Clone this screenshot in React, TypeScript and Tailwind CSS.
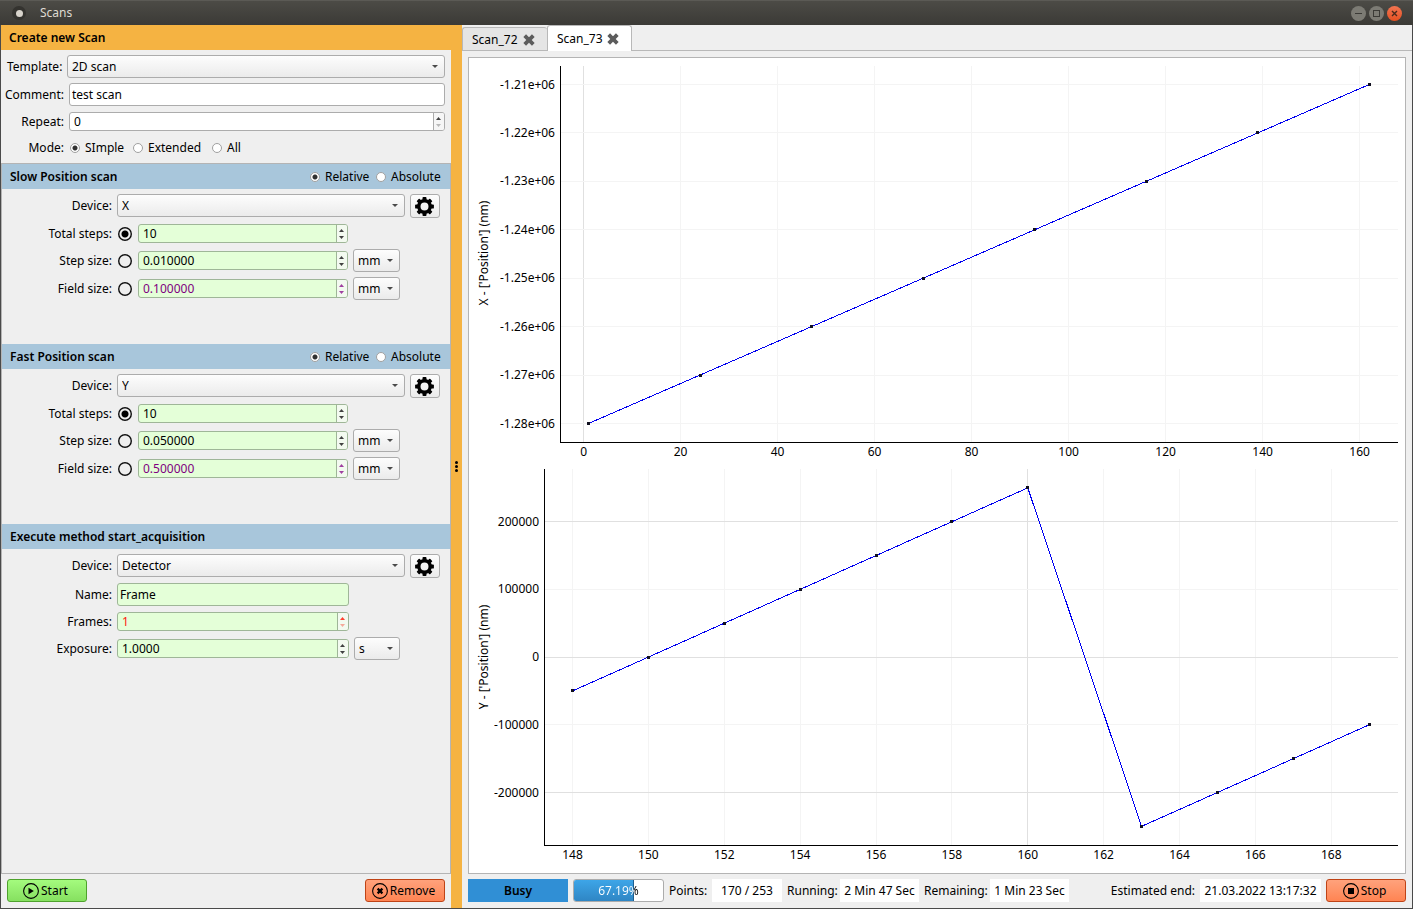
import { useState, type ReactNode } from 'react';

const SELECT_BG = 'bg-linear-to-b from-[#fdfdfd] to-[#ebebeb]';

interface SelectProps {
  label: string;
  value: string;
  options: string[];
  className: string;
}

function Select({ label, value, options, className }: SelectProps) {
  return (
    <span className={`relative block h-[23px] ${className}`}>
      <select
        aria-label={label}
        defaultValue={value}
        className={`block h-full w-full appearance-none rounded-[3px] border border-[#acacac] pl-1 pr-3 ${SELECT_BG}`}
      >
        {options.map((o) => (
          <option key={o}>{o}</option>
        ))}
      </select>
      <svg viewBox="0 0 6 3" className="pointer-events-none absolute right-[7px] top-[10px] h-[3px] w-[6px]">
        <path d="M0 0h6L3 3z" fill="#4a4a4a" />
      </svg>
    </span>
  );
}

interface SpinBoxProps {
  id: string;
  value: string;
  className?: string;
  green?: boolean;
  tone?: 'normal' | 'purple' | 'red';
  atMin?: boolean;
}

const TONES = {
  normal: { text: 'text-black', arrow: '#404040', dim: '#b9b9b9' },
  purple: { text: 'text-[#800080]', arrow: '#a040a0', dim: '#a040a0' },
  red: { text: 'text-[#ff2010]', arrow: '#ff4030', dim: '#f5a99b' },
};

function SpinBox({ id, value, className = '', green = true, tone = 'normal', atMin = false }: SpinBoxProps) {
  const t = TONES[tone];
  return (
    <span
      className={`flex h-[19px] overflow-hidden rounded-[3px] border ${
        green ? 'border-[#9fb698] bg-[#e4ffd8]' : 'border-[#acacac] bg-white'
      } ${className}`}
    >
      <input id={id} defaultValue={value} className={`min-w-0 flex-1 bg-transparent px-1 outline-none ${t.text}`} />
      <span
        className={`flex w-[11px] flex-col gap-[1px] border-l py-[2px] pr-px ${
          green ? 'border-[#9fb698] bg-[#f3faf0]' : 'border-[#acacac] bg-[#f6f6f6]'
        }`}
      >
        <button aria-label="Increase" className="flex flex-1 items-center justify-center">
          <svg viewBox="0 0 5 3" className="h-[3px] w-[5px]">
            <path d="M0 3h5L2.5 0z" fill={t.arrow} />
          </svg>
        </button>
        <button aria-label="Decrease" className="flex flex-1 items-center justify-center">
          <svg viewBox="0 0 5 3" className="h-[3px] w-[5px]">
            <path d="M0 0h5L2.5 3z" fill={atMin ? t.dim : t.arrow} />
          </svg>
        </button>
      </span>
    </span>
  );
}

interface RadioProps {
  name: string;
  label: string;
  checked?: boolean;
  className?: string;
}

function Radio({ name, label, checked, className = '' }: RadioProps) {
  return (
    <label className={`flex items-center gap-[5px] whitespace-nowrap ${className}`}>
      <input
        type="radio"
        name={name}
        defaultChecked={checked}
        className="size-[10px] shrink-0 appearance-none rounded-full border border-[#a0a0a0] bg-white checked:bg-[radial-gradient(circle,#303030_2px,#ffffff_3px)]"
      />
      {label}
    </label>
  );
}

function GearButton() {
  return (
    <button
      aria-label="Device settings"
      className={`flex h-6 w-[30px] items-center justify-center rounded-[3px] border border-[#acacac] pr-px ${SELECT_BG}`}
    >
      <svg viewBox="-10 -10 20 20" className="size-[19px]">
        <circle r="6" fill="none" stroke="#000" strokeWidth="3.6" />
        {[0, 45, 90, 135, 180, 225, 270, 315].map((a) => (
          <rect key={a} x="-2.1" y="-9.9" width="4.2" height="4" rx="0.9" transform={`rotate(${a})`} />
        ))}
      </svg>
    </button>
  );
}

function Section({ title, children, modes }: { title: string; children: ReactNode; modes?: boolean }) {
  return (
    <section className="h-[180px]">
      <header className="flex h-[25px] items-center justify-between bg-[#a8c6db] pl-2 pr-[10px]">
        <h2 className="font-semibold">{title}</h2>
        {modes && (
          <div className="flex">
            <Radio name={title} label="Relative" checked className="w-[66px]" />
            <Radio name={title} label="Absolute" className="w-16" />
          </div>
        )}
      </header>
      <div className="flex flex-col pt-[5px]">{children}</div>
    </section>
  );
}

function Row({ label, id, className, children }: { label: string; id?: string; className: string; children: ReactNode }) {
  return (
    <div className={`flex items-center gap-[5px] ${className}`}>
      <label htmlFor={id} className="w-[110px] shrink-0 text-right">
        {label}
      </label>
      {children}
    </div>
  );
}

function DeviceRow({ value }: { value: string }) {
  return (
    <Row label="Device:" className="h-6 pr-[10px]">
      <Select label="Device" value={value} options={['X', 'Y', 'Detector']} className="flex-1 self-start" />
      <GearButton />
    </Row>
  );
}

interface StepRowProps {
  group: string;
  label: string;
  value: string;
  checked?: boolean;
  unit?: boolean;
  tone?: 'normal' | 'purple';
  className: string;
}

function StepRow({ group, label, value, checked, unit, tone, className }: StepRowProps) {
  const id = `${group}-${label}`;
  return (
    <Row label={`${label}:`} id={id} className={className}>
      <span className="flex w-4 shrink-0 justify-center">
        <input
          type="radio"
          name={`${group}-source`}
          aria-label={`Set ${label}`}
          defaultChecked={checked}
          className="size-[14px] appearance-none rounded-full bg-[radial-gradient(circle,transparent_5px,#101010_6px)] checked:bg-[radial-gradient(circle,#000000_3px,transparent_4px,transparent_5px,#101010_6px)]"
        />
      </span>
      <SpinBox id={id} value={value} tone={tone} className="w-[210px]" />
      {unit && <Select label={`${label} unit`} value="mm" options={['nm', 'mm']} className="w-[47px]" />}
    </Row>
  );
}

function PositionScan({ title, device, step, field }: { title: string; device: string; step: string; field: string }) {
  return (
    <Section title={title} modes>
      <DeviceRow value={device} />
      <StepRow group={title} label="Total steps" value="10" checked className="mt-[6px] h-[19px]" />
      <StepRow group={title} label="Step size" value={step} unit className="mt-[6px] h-[23px]" />
      <StepRow group={title} label="Field size" value={field} unit tone="purple" className="mt-[5px] h-[23px]" />
    </Section>
  );
}

type IconKind = 'play' | 'cross' | 'stop';

function CircleIcon({ kind }: { kind: IconKind }) {
  return (
    <svg viewBox="0 0 16 16" className="size-4">
      <circle cx="8" cy="8" r="7.4" fill="none" stroke="#000" strokeWidth="1.1" />
      {kind === 'play' && <path d="M5.5 4.8L10.8 8l-5.3 3.2z" />}
      {kind === 'cross' && <path d="M5.6 5.6l4.8 4.8M10.4 5.6l-4.8 4.8" stroke="#000" strokeWidth="2.2" />}
      {kind === 'stop' && <rect x="5" y="5" width="6" height="6" />}
    </svg>
  );
}

function ActionButton({ kind, label }: { kind: IconKind; label: string }) {
  const colors =
    kind === 'play'
      ? 'border-[#4ea22c] from-[#a4fb7e] to-[#86e060]'
      : 'border-[#bf4316] from-[#ffa27c] to-[#ff8452]';
  return (
    <button
      className={`flex h-[23px] w-20 items-center justify-center gap-[2px] rounded-[3px] border bg-linear-to-b pr-[3px] ${colors}`}
    >
      <CircleIcon kind={kind} />
      {label}
    </button>
  );
}

interface ChartProps {
  title: string;
  height: number;
  left: number;
  top: number;
  bottom: number;
  titleY: number;
  xTicks: number[];
  yTicks: { value: number; label: string }[];
  points: [number, number][];
  toX: (v: number) => number;
  toY: (v: number) => number;
  strongX: number[];
  strongY: number[];
}

function Chart(props: ChartProps) {
  const { title, height, left, top, bottom, titleY, xTicks, yTicks, points, toX, toY, strongX, strongY } = props;
  const right = 929;
  return (
    <svg viewBox={`0 0 936 ${height}`} role="img" aria-label={title} className="block w-full" fontSize="12">
      <g shapeRendering="crispEdges">
        {xTicks.map((v) => (
          <path
            key={v}
            d={`M${Math.floor(toX(v)) + 0.5} ${top}V${bottom}`}
            stroke={strongX.includes(v) ? '#e0e0e0' : '#f4f4f4'}
          />
        ))}
        {yTicks.map(({ value }) => (
          <path
            key={value}
            d={`M${left} ${Math.floor(toY(value)) + 0.5}H${right}`}
            stroke={strongY.includes(value) ? '#e0e0e0' : '#f4f4f4'}
          />
        ))}
        <path d={`M${left + 0.5} ${top}V${bottom + 0.5}H${right}`} fill="none" stroke="#000" />
        <polyline points={points.map(([x, y]) => `${toX(x)},${toY(y)}`).join(' ')} fill="none" stroke="#0000f0" />
        {points.map(([x, y]) => (
          <rect key={x} x={Math.floor(toX(x)) - 1} y={Math.floor(toY(y)) - 1} width="3" height="3" fill="#101020" />
        ))}
      </g>
      {xTicks.map((v) => (
        <text key={v} x={toX(v)} y={bottom + 14} textAnchor="middle">
          {v}
        </text>
      ))}
      {yTicks.map(({ value, label }) => (
        <text key={value} x={left - 5} y={toY(value) + 4} textAnchor="end">
          {label}
        </text>
      ))}
      <text transform={`translate(19 ${titleY}) rotate(-90)`} textAnchor="middle">
        {title}
      </text>
    </svg>
  );
}

const X_POINTS: [number, number][] = [1, 24, 47, 70, 93, 116, 139, 162].map((x, i) => [x, -1.28 + i * 0.01]);

const Y_POINTS: [number, number][] = [
  [148, -50000],
  [150, 0],
  [152, 50000],
  [154, 100000],
  [156, 150000],
  [158, 200000],
  [160, 250000],
  [163, -250000],
  [165, -200000],
  [167, -150000],
  [169, -100000],
];

function Plots() {
  return (
    <div className="flex-1 border border-[#b4b4b4] bg-white">
      <Chart
        title="X - ['Position'] (nm)"
        height={404}
        left={91}
        top={8}
        bottom={384}
        titleY={195}
        xTicks={[0, 20, 40, 60, 80, 100, 120, 140, 160]}
        yTicks={[1.21, 1.22, 1.23, 1.24, 1.25, 1.26, 1.27, 1.28].map((v) => ({ value: -v, label: `-${v}e+06` }))}
        points={X_POINTS}
        toX={(v) => 114.6 + v * 4.85}
        toY={(v) => 26.5 + (-1.21 - v) * 4843}
        strongX={[0]}
        strongY={[]}
      />
      <Chart
        title="Y - ['Position'] (nm)"
        height={411}
        left={75}
        top={7}
        bottom={383}
        titleY={195}
        xTicks={[148, 150, 152, 154, 156, 158, 160, 162, 164, 166, 168]}
        yTicks={[200000, 100000, 0, -100000, -200000].map((v) => ({ value: v, label: String(v) }))}
        points={Y_POINTS}
        toX={(v) => 103.5 + (v - 148) * 37.94}
        toY={(v) => 195.1 - v * 0.000677}
        strongX={[160]}
        strongY={[200000, 0, -200000]}
      />
    </div>
  );
}

function CloseMark() {
  return (
    <svg viewBox="0 0 12 12" className="size-3">
      <path d="M1.7 1.7l8.6 8.6M10.3 1.7l-8.6 8.6" stroke="#5c5c5c" strokeWidth="3.8" />
    </svg>
  );
}

function Tab({ label, active, onSelect }: { label: string; active: boolean; onSelect: () => void }) {
  return (
    <div
      className={`flex w-[85px] items-center justify-between rounded-t-[3px] border border-b-0 border-[#b8b8b8] pl-[9px] pr-3 ${
        active ? 'h-[26px] bg-white' : 'mb-px h-[23px] border-r-0 bg-[#e5e5e5] pt-[2px]'
      }`}
    >
      <button role="tab" aria-selected={active} onClick={onSelect}>
        {label}
      </button>
      <button aria-label={`Close ${label}`}>
        <CloseMark />
      </button>
    </div>
  );
}

function StatusValue({ children, className }: { children: ReactNode; className: string }) {
  return (
    <output className={`flex h-[23px] items-center justify-center whitespace-nowrap bg-white ${className}`}>
      {children}
    </output>
  );
}

function Progress({ percent }: { percent: number }) {
  return (
    <div
      role="progressbar"
      aria-label="Scan progress"
      aria-valuenow={percent}
      className="relative h-[23px] w-[91px] overflow-hidden rounded-[3px] border border-[#acacac] bg-white"
    >
      <div
        className="absolute inset-y-0 left-0 border-r border-[#1f5f8f] bg-linear-to-b from-[#3da5e8] to-[#2f86c4]"
        style={{ width: `${percent}%` }}
      />
      {/* the text turns white where the bar is filled */}
      <span
        className="relative block h-full bg-clip-text text-center leading-[21px] text-transparent"
        style={{ backgroundImage: `linear-gradient(90deg, #fff ${percent}%, #000 ${percent}%)` }}
      >
        {percent}%
      </span>
    </div>
  );
}

function TitleBar() {
  return (
    <header className="flex h-[25px] items-center border-t border-[#5b5a55] bg-linear-to-b from-[#4c4b46] to-[#3b3a36] pl-3 pr-[11px] text-[#dfdbd2]">
      <span className="flex size-[14px] items-center justify-center rounded-full bg-[#34332f]">
        <span className="size-[7px] rounded-full bg-[#d8d4cc]" />
      </span>
      <h1 className="ml-[14px] flex-1">Scans</h1>
      <div className="flex gap-[3px]">
        <button aria-label="Minimize" className="size-[15px] rounded-full bg-[#7c7b74]">
          <svg viewBox="0 0 15 15" className="size-full">
            <path d="M4 7.5h7" stroke="#3b3a36" />
          </svg>
        </button>
        <button aria-label="Maximize" className="size-[15px] rounded-full bg-[#7c7b74]">
          <svg viewBox="0 0 15 15" className="size-full">
            <rect x="4.5" y="4.5" width="6" height="6" fill="none" stroke="#3b3a36" />
          </svg>
        </button>
        <button aria-label="Close" className="size-[15px] rounded-full bg-linear-to-b from-[#f27450] to-[#e5501f]">
          <svg viewBox="0 0 15 15" className="size-full">
            <path d="M5 5l5 5M10 5l-5 5" stroke="#4a2a1c" strokeWidth="1.4" />
          </svg>
        </button>
      </div>
    </header>
  );
}

function ScanForm() {
  return (
    <aside className="flex w-[450px] shrink-0 flex-col">
      <h2 className="flex h-[25px] items-center bg-[#f5b342] pl-2 font-semibold">Create new Scan</h2>
      <div className="flex h-[113px] flex-col pl-[6px] pr-[6px] pt-[5px]">
        <div className="flex h-[23px] items-center gap-[5px]">
          <span className="w-[55px] whitespace-nowrap">Template:</span>
          <Select label="Template" value="2D scan" options={['1D scan', '2D scan']} className="flex-1" />
        </div>
        <div className="mt-[5px] flex h-[23px] items-center gap-[5px]">
          <label htmlFor="comment" className="flex w-[57px] justify-end">
            Comment:
          </label>
          <input
            id="comment"
            defaultValue="test scan"
            className="h-full min-w-0 flex-1 rounded-[3px] border border-[#acacac] bg-white px-[2px]"
          />
        </div>
        <div className="mt-[6px] flex h-[19px] items-center gap-[5px]">
          <label htmlFor="repeat" className="flex w-[57px] justify-end">
            Repeat:
          </label>
          <SpinBox id="repeat" value="0" green={false} atMin className="flex-1" />
        </div>
        <div className="mt-[7px] flex h-[19px] items-center">
          <span className="w-[57px] text-right">Mode:</span>
          <Radio name="mode" label="SImple" checked className="ml-[6px] w-[63px]" />
          <Radio name="mode" label="Extended" className="w-[79px]" />
          <Radio name="mode" label="All" />
        </div>
      </div>
      <div className="flex-1 border border-[#b4b4b4]">
        <PositionScan title="Slow Position scan" device="X" step="0.010000" field="0.100000" />
        <PositionScan title="Fast Position scan" device="Y" step="0.050000" field="0.500000" />
        <Section title="Execute method start_acquisition">
          <DeviceRow value="Detector" />
          <Row label="Name:" id="name" className="mt-[5px] h-[23px]">
            <input
              id="name"
              defaultValue="Frame"
              className="h-full w-[232px] rounded-[3px] border border-[#9fb698] bg-[#e4ffd8] px-[2px]"
            />
          </Row>
          <Row label="Frames:" id="frames" className="mt-[6px] h-[19px]">
            <SpinBox id="frames" value="1" tone="red" atMin className="w-[232px]" />
          </Row>
          <Row label="Exposure:" id="exposure" className="mt-[6px] h-[23px]">
            <SpinBox id="exposure" value="1.0000" className="w-[232px]" />
            <Select label="Exposure unit" value="s" options={['ms', 's']} className="w-[46px]" />
          </Row>
        </Section>
      </div>
      <footer className="flex h-[34px] items-start justify-between px-[6px] pt-[5px]">
        <ActionButton kind="play" label="Start" />
        <ActionButton kind="cross" label="Remove" />
      </footer>
    </aside>
  );
}

function ScanView() {
  const [active, setActive] = useState('Scan_73');
  return (
    <main className="flex min-w-0 flex-1 flex-col">
      <div role="tablist" className="flex h-[26px] items-end bg-[linear-gradient(#b8b8b8,#b8b8b8)] bg-[length:100%_1px] bg-bottom bg-no-repeat">
        {['Scan_72', 'Scan_73'].map((name) => (
          <Tab key={name} label={name} active={name === active} onSelect={() => setActive(name)} />
        ))}
      </div>
      <div className="flex flex-1 flex-col px-[6px] pt-[6px]">
        <Plots />
        <footer className="flex h-[34px] items-start gap-[5px] pt-[5px] leading-[23px]">
          <output className="h-[23px] w-[100px] bg-[#308fd5] text-center font-semibold">Busy</output>
          <Progress percent={67.19} />
          <span className="w-[38px] whitespace-nowrap">Points:</span>
          <StatusValue className="w-[70px]">170 / 253</StatusValue>
          <span className="w-12 whitespace-nowrap">Running:</span>
          <StatusValue className="w-[79px]">2 Min 47 Sec</StatusValue>
          <span className="w-[61px] whitespace-nowrap">Remaining:</span>
          <StatusValue className="w-[79px]">1 Min 23 Sec</StatusValue>
          <span className="flex-1 whitespace-nowrap text-right">Estimated end:</span>
          <StatusValue className="w-[121px]">21.03.2022 13:17:32</StatusValue>
          <ActionButton kind="stop" label="Stop" />
        </footer>
      </div>
    </main>
  );
}

export default function App() {
  return (
    <div className="flex min-h-screen flex-col bg-[#3b3a36] font-['Noto_Sans',sans-serif] text-[12px] leading-4 text-black">
      <TitleBar />
      <div className="flex flex-1 border border-t-0 border-[#4a4a4a] bg-[#efefef]">
        <ScanForm />
        <div role="separator" className="flex w-[11px] shrink-0 flex-col items-center justify-center gap-[1px] bg-[#f5b342]">
          <span className="size-[3px] rounded-full bg-black" />
          <span className="size-[3px] rounded-full bg-black" />
          <span className="size-[3px] rounded-full bg-black" />
        </div>
        <ScanView />
      </div>
    </div>
  );
}
